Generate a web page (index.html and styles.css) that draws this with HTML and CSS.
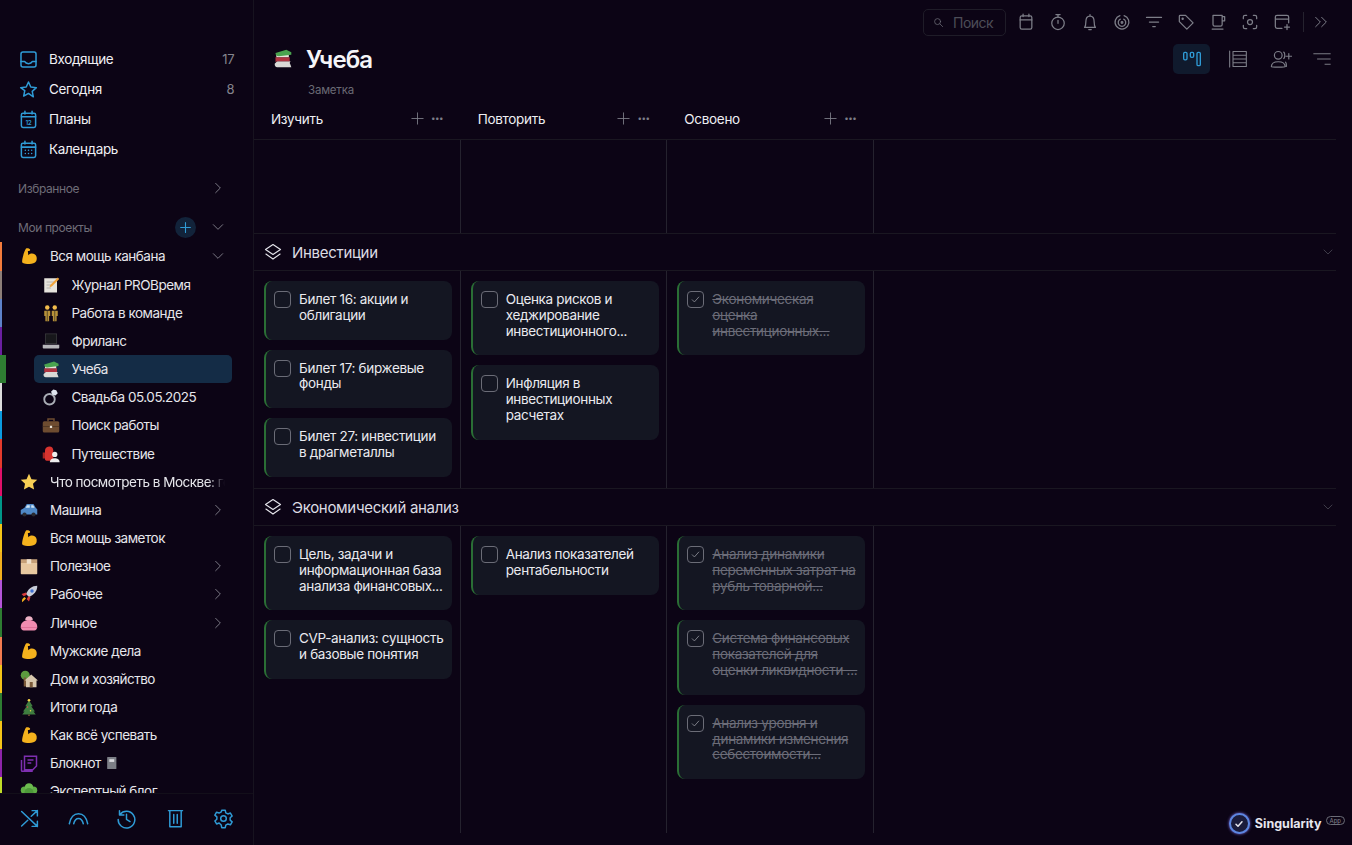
FILE: index.html
```html
<!DOCTYPE html>
<html lang="ru">

<head>
    <meta charset="UTF-8">
    <meta name="viewport" content="width=device-width, initial-scale=1.0">
    <title>Учеба</title>
    <link rel="stylesheet" href="styles.css">
</head>

<body>

    <svg class="sprite" xmlns="http://www.w3.org/2000/svg">
        <!-- line icons -->
        <symbol id="i-inbox" viewBox="0 0 24 24"><rect x="2.500" y="2.500" width="19" height="19" rx="2.500"/><path d="M2.500 14.500H7c1 1.800 3 2.800 5 2.800s4-1 5-2.800h4.500"/></symbol>
        <symbol id="i-star" viewBox="0 0 24 24"><path d="M12 2.500l2.900 6.400 7 .8-5.200 4.700 1.400 6.900L12 17l-6.100 3.300 1.400-6.900L2.100 9.700l7-.8z"/></symbol>
        <symbol id="i-plans" viewBox="0 0 24 24"><rect x="3" y="4" width="18" height="18" rx="2"/><path d="M3 8.500h18M7.500 1.500V5M16.500 1.500V5"/><text x="12" y="19" class="svg-num">12</text></symbol>
        <symbol id="i-cal" viewBox="0 0 24 24"><rect x="3" y="4" width="18" height="18" rx="2"/><path d="M3 9h18M7.500 1.500V5M16.500 1.500V5M8 13h.01M12 13h.01M16 13h.01M8 17h.01M12 17h.01M16 17h.01"/></symbol>
        <symbol id="i-right" viewBox="0 0 24 24"><path d="M8 4l8 8-8 8"/></symbol>
        <symbol id="i-down" viewBox="0 0 24 24"><path d="M4 8l8 8 8-8"/></symbol>
        <symbol id="i-plus" viewBox="0 0 24 24"><path d="M12 3v18M3 12h18"/></symbol>
        <symbol id="i-layers" viewBox="0 0 24 24"><path d="M12 3l9 6-9 6-9-6zM3.500 14.500L12 20.500l8.500-6"/></symbol>
        <symbol id="i-shuffle" viewBox="0 0 24 24"><path d="M3 4l18 17M21 15v6h-6M3 20.500L10 14M14 9.500L21 3M15 3h6v6"/></symbol>
        <symbol id="i-arc" viewBox="0 0 24 24"><path d="M1.500 18C3 10.500 7 6.500 12 6.500s9 4 10.500 11.500M6.500 18c1-4 3-6 5.500-6s4.500 2 5.500 6"/></symbol>
        <symbol id="i-history" viewBox="0 0 24 24"><path d="M4.500 7.500A9.500 9.500 0 1 1 2.500 13M4 3v5h5M12 7v6l4 2.500"/></symbol>
        <symbol id="i-trash" viewBox="0 0 24 24"><path d="M4 3h16M5.500 3v18.500h13V3M10 7.500v10M14 7.500v10"/></symbol>
        <symbol id="i-gear" viewBox="0 0 24 24"><circle cx="12" cy="12" r="3.200"/><path d="M10 2.500h4l.6 3 2.400 1.300 2.900-1 2 3.400-2.300 2v2.600l2.300 2-2 3.400-2.900-1-2.400 1.300-.6 3h-4l-.6-3L7 17.200l-2.900 1-2-3.400 2.300-2v-2.600l-2.300-2 2-3.400 2.900 1 2.400-1.300z"/></symbol>
        <symbol id="i-search" viewBox="0 0 24 24"><circle cx="10" cy="10" r="6.500"/><path d="M15 15l6 6"/></symbol>
        <symbol id="i-tcal" viewBox="0 0 24 24"><rect x="5" y="4.500" width="14" height="16" rx="2"/><path d="M5 9.500h14M8.500 2.500v3M15.500 2.500v3"/></symbol>
        <symbol id="i-timer" viewBox="0 0 24 24"><circle cx="12" cy="13.500" r="7.500"/><path d="M9.500 3h5M12 3v3M12 10v3.500"/></symbol>
        <symbol id="i-bell" viewBox="0 0 24 24"><path d="M5.500 18.500h13c-1.300-1.500-1.500-3-1.500-6.500 0-4-1.500-7-5-7s-5 3-5 7c0 3.500-.2 5-1.500 6.500zM12 3v2M10.500 21h3"/></symbol>
        <symbol id="i-target" viewBox="0 0 24 24"><path d="M14.500 4.300a8.300 8.300 0 1 1-5 0M14 8.600a4.500 4.500 0 1 1-4 0"/><circle cx="12" cy="12.500" r="1"/></symbol>
        <symbol id="i-filter" viewBox="0 0 24 24"><path d="M3 6.500h18M6.500 12h11M10.500 17.500h3"/></symbol>
        <symbol id="i-tag" viewBox="0 0 24 24"><path d="M4 5c0-.7.300-1 1-1h6.500l9 9-7.500 7.500-9-9z"/><circle cx="8" cy="8" r=".7"/></symbol>
        <symbol id="i-cup" viewBox="0 0 24 24"><path d="M6 4h11v11a2 2 0 0 1-2 2H8a2 2 0 0 1-2-2zM17 5.500h3v5h-3M5 20.500h13"/></symbol>
        <symbol id="i-focus" viewBox="0 0 24 24"><path d="M8 4H6a2 2 0 0 0-2 2v2M16 4h2a2 2 0 0 1 2 2v2M8 20H6a2 2 0 0 1-2-2v-2M16 20h2a2 2 0 0 0 2-2v-2"/><circle cx="12" cy="12" r="3"/></symbol>
        <symbol id="i-calplus" viewBox="0 0 24 24"><path d="M12 19.500H6a2 2 0 0 1-2-2V6a2 2 0 0 1 2-2h12a2 2 0 0 1 2 2v7M4 8.500h16M18 15v6M15 18h6"/></symbol>
        <symbol id="i-more" viewBox="0 0 24 24"><path d="M4 5l7 7-7 7M13 5l7 7-7 7"/></symbol>
        <symbol id="i-kanban" viewBox="0 0 24 24"><rect x="2" y="4" width="4" height="9" rx="1.500"/><rect x="10" y="4" width="4" height="6" rx="1.500"/><rect x="18" y="4" width="4" height="16" rx="1.500"/></symbol>
        <symbol id="i-list" viewBox="0 0 24 24"><path d="M2 2.500v19M6 3h16v18H6zM6 7.500h16M6 12h16M6 16.500h16"/></symbol>
        <symbol id="i-team" viewBox="0 0 24 24"><circle cx="9" cy="8" r="4.200"/><path d="M1.500 20.500c0-3.500 3-5.500 7.500-5.500s7.500 2 7.500 5.500c0 .5-15 .5-15 0zM15 4.500c1.500.8 1.500 6 0 7M17 15.500c.8 1 1 2.500.8 4.500M20.500 6v6M17.500 9h6"/></symbol>
        <symbol id="i-sort" viewBox="0 0 24 24"><path d="M1 5h22M6 12h17M16 19h7"/></symbol>
        <symbol id="i-check" viewBox="0 0 24 24"><path d="M6 12.500l4 4 8-9"/></symbol>

        <!-- emoji -->
        <symbol id="e-arm" viewBox="0 0 24 24"><path d="M8 2c2-1 5 0 5.500 1.500.4 1.300-1.500 2-3 1.800L11 11c2-2.500 6-3 9-1 2.500 1.800 3 6 1.500 9-1.500 2.500-5 3.500-9 3.500-3.500 0-8-.5-9.500-2-.9-2 2-14 5-18.500z" fill="#f5b21d"/></symbol>
        <symbol id="e-memo" viewBox="0 0 24 24"><rect x="3" y="3" width="17" height="19" fill="#e6e3dc"/><path d="M6 8h11M6 12h8M6 16h6" stroke="#a9a7a2" fill="none"/><path d="M21 2l2 2-10 10-3 1 1-3z" fill="#f2a33a"/></symbol>
        <symbol id="e-people" viewBox="0 0 24 24"><circle cx="7" cy="4.500" r="3" fill="#f3bd4c"/><circle cx="17" cy="4.500" r="3" fill="#f3bd4c"/><path d="M3 9h8v7H9.500v7h-5v-7H3zM13 9h8v7h-1.500v7h-5v-7H13z" fill="#b8923a"/><path d="M7 9v14M17 9v14" stroke="#3d3520"/></symbol>
        <symbol id="e-laptop" viewBox="0 0 24 24"><path d="M4 2h16v14H4z" fill="#3a3a3e"/><path d="M5 3h14v12H5z" fill="#17171b"/><path d="M1 17h22v3.500c0 .8-.5 1.500-1.500 1.500h-19C1.500 22 1 21.300 1 20.500z" fill="#b6b6ba"/></symbol>
        <symbol id="e-books" viewBox="0 0 24 24"><path d="M2 19l3-3h16l-1 2 1 2 1 3H5c-2 0-3-1-3-4z" fill="#d9d9d6"/><path d="M3 11h17v5H6c-2 0-3 1-3 1z" fill="#b03340"/><path d="M4 8h15v3H4z" fill="#e9e5da"/><path d="M3 6l13-4 6 3v3l-15 2c-3 0-4-2-4-4z" fill="#4aa34f"/></symbol>
        <symbol id="e-ring" viewBox="0 0 24 24"><circle cx="10" cy="15" r="7" fill="none" stroke="#a9adb5" stroke-width="2.500"/><path d="M15 2l4 1 2 4-3 3-4-1-2-4z" fill="#dfe5ee"/></symbol>
        <symbol id="e-case" viewBox="0 0 24 24"><path d="M8 7V4h8v3" fill="none" stroke="#6e4c30" stroke-width="2"/><rect x="1" y="7" width="22" height="15" rx="2" fill="#6e4c30"/><path d="M1 14h22" stroke="#4a3220"/><rect x="10.500" y="13" width="3" height="3" fill="#e8e2d8"/></symbol>
        <symbol id="e-pack" viewBox="0 0 24 24"><path d="M4 7c0-3 3-5 6-5s5 2 5 5v12c0 1-1 2-2 2H6c-1 0-2-1-2-2z" fill="#d8332f"/><path d="M1 10h3v8H1z" fill="#a82522"/><circle cx="17" cy="12.500" r="3.500" fill="#eee"/><path d="M10.500 23c0-4 3-5.500 6.500-5.500S23.500 19 23.500 23z" fill="#eee"/></symbol>
        <symbol id="e-star" viewBox="0 0 24 24"><path d="M12 1l3.300 7.200 7.700.9-5.700 5.300 1.500 7.600L12 18.200 5.200 22l1.500-7.600L1 9.100l7.700-.9z" fill="#f8cf55"/></symbol>
        <symbol id="e-car" viewBox="0 0 24 24"><path d="M6 9l3-5h9l3 5 2 2v7H1v-6z" fill="#4f88c6"/><path d="M9.500 5.500h3.500V9H7.500zM15 5.500h2.500L19.500 9H15z" fill="#cfe3f4"/><circle cx="6" cy="18" r="2.800" fill="#2a2a30"/><circle cx="18" cy="18" r="2.800" fill="#2a2a30"/></symbol>
        <symbol id="e-box" viewBox="0 0 24 24"><path d="M1 3h22v5H1z" fill="#c6a078"/><path d="M1 8h22v14c0 .5-.5 1-1 1H2c-.5 0-1-.5-1-1z" fill="#e8c8a0"/><path d="M9 3h6v6H9z" fill="#f0e2ce"/></symbol>
        <symbol id="e-rocket" viewBox="0 0 24 24"><path d="M23 1c-7 0-12 4-15 11l4 4c7-3 11-8 11-15z" fill="#c8ccd8"/><circle cx="16" cy="8" r="2.300" fill="#3f6fd1"/><path d="M8 10l-6 2 3 3 4-2zM14 16l-2 6-3-3 2-4z" fill="#d83a3a"/><path d="M6 16l2 2-5 5c-1-3 0-5 3-7z" fill="#f5b21d"/></symbol>
        <symbol id="e-purse" viewBox="0 0 24 24"><path d="M7 8a5 5 0 0 1 10 0" fill="#eeb2c6"/><path d="M1 17c0-6 5-9 11-9s11 3 11 9c0 3-2 5-4 5H5c-2 0-4-2-4-5z" fill="#f08cb0"/><path d="M1 18h22" stroke="#d96a92"/></symbol>
        <symbol id="e-house" viewBox="0 0 24 24"><circle cx="7" cy="7" r="6" fill="#5c9a3e"/><path d="M5 10h3v12H5z" fill="#7b5a3a"/><path d="M6 14l9-8 9 8h-2v9H8v-9z" fill="#d7c7ad"/><path d="M13 16h4v7h-4z" fill="#7b5a3a"/></symbol>
        <symbol id="e-xmas" viewBox="0 0 24 24"><path d="M12 3l5 8h-2l5 7h-2l3 4H3l3-4H4l5-7H7z" fill="#3f7d3f"/><circle cx="12" cy="3" r="1.800" fill="#f5d24a"/><circle cx="10" cy="12" r="1" fill="#e24a4a"/><circle cx="14" cy="17" r="1" fill="#e6d44a"/><path d="M11 22h2v2h-2z" fill="#7b5a3a"/></symbol>
        <symbol id="e-note" viewBox="0 0 24 24"><path d="M6 3h16v13l-5 5H6zM2 8v14c0 .5.500 1 1 1h14" fill="none" stroke="#7e2fb0" stroke-width="2"/><path d="M10 8h8M10 12h5" stroke="#7e2fb0" stroke-width="2"/></symbol>
        <symbol id="e-book" viewBox="0 0 24 24"><rect x="4" y="1" width="17" height="22" rx="1" fill="#7c7f86"/><rect x="8" y="5" width="9" height="5" fill="#d8dade"/></symbol>
        <symbol id="e-clover" viewBox="0 0 24 24"><circle cx="6" cy="11" r="5" fill="#5fae45"/><circle cx="18" cy="11" r="5" fill="#5fae45"/><circle cx="12" cy="7" r="5.500" fill="#6cbb4f"/><circle cx="12" cy="14" r="6" fill="#4e9a3a"/></symbol>
    </svg>

    <div class="app">
        <aside class="sidebar">
            <nav class="main-nav">
                <a class="nav-row"><svg class="ico nav-ico"><use href="#i-inbox"/></svg><span class="nav-name">Входящие</span><span class="count">17</span></a>
                <a class="nav-row"><svg class="ico nav-ico"><use href="#i-star"/></svg><span class="nav-name">Сегодня</span><span class="count">8</span></a>
                <a class="nav-row"><svg class="ico nav-ico"><use href="#i-plans"/></svg><span class="nav-name">Планы</span></a>
                <a class="nav-row"><svg class="ico nav-ico"><use href="#i-cal"/></svg><span class="nav-name">Календарь</span></a>
            </nav>

            <div class="section fav">
                <span class="section-name">Избранное</span>
                <svg class="ico chev"><use href="#i-right"/></svg>
            </div>
            <div class="section projects">
                <span class="section-name">Мои проекты</span>
                <span class="add-btn"><svg class="ico"><use href="#i-plus"/></svg></span>
                <svg class="ico chev"><use href="#i-down"/></svg>
            </div>

            <div class="tree">
                <div class="row c-orange"><span class="bar"></span><svg class="emoji"><use href="#e-arm"/></svg><span class="row-name">Вся мощь канбана</span><svg class="ico chev"><use href="#i-down"/></svg></div>
                <div class="row child c-taupe"><span class="bar"></span><svg class="emoji"><use href="#e-memo"/></svg><span class="row-name">Журнал PROВремя</span></div>
                <div class="row child c-blue"><span class="bar"></span><svg class="emoji"><use href="#e-people"/></svg><span class="row-name">Работа в команде</span></div>
                <div class="row child c-violet"><span class="bar"></span><svg class="emoji"><use href="#e-laptop"/></svg><span class="row-name">Фриланс</span></div>
                <div class="row child active c-green"><span class="bar"></span><span class="pill"><svg class="emoji"><use href="#e-books"/></svg><span class="row-name">Учеба</span></span></div>
                <div class="row child c-white"><span class="bar"></span><svg class="emoji"><use href="#e-ring"/></svg><span class="row-name">Свадьба 05.05.2025</span></div>
                <div class="row child c-sky"><span class="bar"></span><svg class="emoji"><use href="#e-case"/></svg><span class="row-name">Поиск работы</span></div>
                <div class="row child c-red"><span class="bar"></span><svg class="emoji"><use href="#e-pack"/></svg><span class="row-name">Путешествие</span></div>
                <div class="row c-pink"><span class="bar"></span><svg class="emoji"><use href="#e-star"/></svg><span class="row-name fade">Что посмотреть в Москве: город</span></div>
                <div class="row c-teal"><span class="bar"></span><svg class="emoji"><use href="#e-car"/></svg><span class="row-name">Машина</span><svg class="ico chev"><use href="#i-right"/></svg></div>
                <div class="row c-yellow"><span class="bar"></span><svg class="emoji"><use href="#e-arm"/></svg><span class="row-name">Вся мощь заметок</span></div>
                <div class="row c-amber"><span class="bar"></span><svg class="emoji"><use href="#e-box"/></svg><span class="row-name">Полезное</span><svg class="ico chev"><use href="#i-right"/></svg></div>
                <div class="row c-orchid"><span class="bar"></span><svg class="emoji"><use href="#e-rocket"/></svg><span class="row-name">Рабочее</span><svg class="ico chev"><use href="#i-right"/></svg></div>
                <div class="row c-green"><span class="bar"></span><svg class="emoji"><use href="#e-purse"/></svg><span class="row-name">Личное</span><svg class="ico chev"><use href="#i-right"/></svg></div>
                <div class="row c-salmon"><span class="bar"></span><svg class="emoji"><use href="#e-arm"/></svg><span class="row-name">Мужские дела</span></div>
                <div class="row c-yellow"><span class="bar"></span><svg class="emoji"><use href="#e-house"/></svg><span class="row-name">Дом и хозяйство</span></div>
                <div class="row c-green"><span class="bar"></span><svg class="emoji"><use href="#e-xmas"/></svg><span class="row-name">Итоги года</span></div>
                <div class="row c-yellow"><span class="bar"></span><svg class="emoji"><use href="#e-arm"/></svg><span class="row-name">Как всё успевать</span></div>
                <div class="row c-purple"><span class="bar"></span><svg class="emoji"><use href="#e-note"/></svg><span class="row-name">Блокнот <svg class="emoji-inline"><use href="#e-book"/></svg></span></div>
                <div class="row c-lime"><span class="bar"></span><svg class="emoji"><use href="#e-clover"/></svg><span class="row-name">Экспертный блог</span></div>
            </div>

            <div class="side-foot">
                <svg class="ico"><use href="#i-shuffle"/></svg>
                <svg class="ico"><use href="#i-arc"/></svg>
                <svg class="ico"><use href="#i-history"/></svg>
                <svg class="ico"><use href="#i-trash"/></svg>
                <svg class="ico"><use href="#i-gear"/></svg>
            </div>
        </aside>

        <main class="content">
            <div class="toolbar">
                <div class="search"><svg class="ico"><use href="#i-search"/></svg><span>Поиск</span></div>
                <svg class="ico tool"><use href="#i-tcal"/></svg>
                <svg class="ico tool"><use href="#i-timer"/></svg>
                <svg class="ico tool"><use href="#i-bell"/></svg>
                <svg class="ico tool"><use href="#i-target"/></svg>
                <svg class="ico tool"><use href="#i-filter"/></svg>
                <svg class="ico tool"><use href="#i-tag"/></svg>
                <svg class="ico tool"><use href="#i-cup"/></svg>
                <svg class="ico tool"><use href="#i-focus"/></svg>
                <svg class="ico tool"><use href="#i-calplus"/></svg>
                <span class="tool-sep"></span>
                <svg class="ico tool tool-more"><use href="#i-more"/></svg>
            </div>

            <div class="title-row">
                <svg class="title-emoji"><use href="#e-books"/></svg>
                <h1>Учеба</h1>
                <div class="views">
                    <span class="view view-on"><svg class="ico"><use href="#i-kanban"/></svg></span>
                    <span class="view"><svg class="ico"><use href="#i-list"/></svg></span>
                    <span class="view"><svg class="ico view-team"><use href="#i-team"/></svg></span>
                    <span class="view"><svg class="ico view-sort"><use href="#i-sort"/></svg></span>
                </div>
            </div>
            <p class="note">Заметка</p>

            <div class="board">
                <div class="heads">
                    <div class="head"><span class="head-name">Изучить</span><svg class="ico"><use href="#i-plus"/></svg><span class="dots">···</span></div>
                    <div class="head"><span class="head-name">Повторить</span><svg class="ico"><use href="#i-plus"/></svg><span class="dots">···</span></div>
                    <div class="head"><span class="head-name">Освоено</span><svg class="ico"><use href="#i-plus"/></svg><span class="dots">···</span></div>
                </div>

                <div class="lane lane-empty">
                    <div class="col"></div>
                    <div class="col"></div>
                    <div class="col"></div>
                </div>

                <div class="group">
                    <svg class="ico"><use href="#i-layers"/></svg>
                    <span class="group-name">Инвестиции</span>
                    <svg class="ico chev"><use href="#i-down"/></svg>
                </div>
                <div class="lane lane-one">
                    <div class="col">
                        <div class="card"><span class="box"></span><p>Билет 16: акции и облигации</p></div>
                        <div class="card"><span class="box"></span><p>Билет 17: биржевые фонды</p></div>
                        <div class="card"><span class="box"></span><p>Билет 27: инвестиции в драгметаллы</p></div>
                    </div>
                    <div class="col">
                        <div class="card"><span class="box"></span><p>Оценка рисков и хеджирование инвестиционного...</p></div>
                        <div class="card"><span class="box"></span><p>Инфляция в инвестиционных расчетах</p></div>
                    </div>
                    <div class="col">
                        <div class="card done"><span class="box"><svg class="ico"><use href="#i-check"/></svg></span><p>Экономическая оценка инвестиционных...</p></div>
                    </div>
                </div>

                <div class="group">
                    <svg class="ico"><use href="#i-layers"/></svg>
                    <span class="group-name">Экономический анализ</span>
                    <svg class="ico chev"><use href="#i-down"/></svg>
                </div>
                <div class="lane lane-two">
                    <div class="col">
                        <div class="card"><span class="box"></span><p>Цель, задачи и информационная база анализа финансовых...</p></div>
                        <div class="card"><span class="box"></span><p>CVP-анализ: сущность и базовые понятия</p></div>
                    </div>
                    <div class="col">
                        <div class="card"><span class="box"></span><p>Анализ показателей рентабельности</p></div>
                    </div>
                    <div class="col">
                        <div class="card done"><span class="box"><svg class="ico"><use href="#i-check"/></svg></span><p>Анализ динамики переменных затрат на рубль товарной...</p></div>
                        <div class="card done"><span class="box"><svg class="ico"><use href="#i-check"/></svg></span><p>Система финансовых показателей для оценки ликвидности ...</p></div>
                        <div class="card done"><span class="box"><svg class="ico"><use href="#i-check"/></svg></span><p>Анализ уровня и динамики изменения себестоимости...</p></div>
                    </div>
                </div>
            </div>
        </main>
    </div>

    <div class="brand">
        <span class="brand-logo"><svg class="ico"><use href="#i-check"/></svg></span>
        <span class="brand-name">Singularity</span>
        <span class="brand-tag">App</span>
    </div>

</body>

</html>
```

FILE: styles.css
```css
* {
    margin: 0;
    box-sizing: border-box;
}

body {
    background-color: #0c0415;
    color: #e9e9ee;
    font-family: 'Inter', 'Noto Sans', sans-serif;
    font-size: 13.5px;
    letter-spacing: -0.5px;
    height: 845px;
    overflow: hidden;
}

.sprite {
    display: none;
}

.svg-num {
    font-family: 'Inter', sans-serif;
    font-size: 8px;
    font-weight: 600;
    text-anchor: middle;
    stroke: none;
    fill: currentColor;
}

.ico {
    fill: none;
    stroke: currentColor;
    stroke-width: 1.7;
    stroke-linecap: round;
    stroke-linejoin: round;
    flex: none;
}

.app {
    display: flex;
    height: 845px;
}

/* sidebar */
.sidebar {
    width: 254px;
    flex: none;
    display: flex;
    flex-direction: column;
    border-right: 1px solid #17131f;
}

.main-nav {
    padding-top: 44px;
}

.nav-row {
    display: flex;
    align-items: center;
    height: 30px;
    padding: 0 19px 0 19px;
}

.nav-ico {
    width: 19px;
    height: 19px;
    color: #2f9bd6;
    margin-right: 11px;
    stroke-width: 1.9;
}

.nav-name {
    flex: 1;
    font-weight: 400;
    letter-spacing: -0.35px;
    color: #f0f0f4;
}

.count {
    color: #85858d;
    font-size: 13px;
}

.section {
    display: flex;
    align-items: center;
    height: 28px;
    padding: 0 28.5px 0 18px;
    color: #6f6d78;
    font-size: 12px;
    letter-spacing: -0.4px;
}

.section-name {
    flex: 1;
}

.fav {
    margin-top: 10px;
}

.projects {
    margin-top: 11px;
    margin-bottom: 1px;
}

.chev {
    width: 14px;
    height: 14px;
    color: #7a7884;
    stroke-width: 1.7;
}

.add-btn {
    width: 21px;
    height: 21px;
    border-radius: 50%;
    background-color: #12233a;
    color: #2f9bd6;
    display: flex;
    align-items: center;
    justify-content: center;
    margin-right: 15px;
}

.add-btn .ico {
    width: 13px;
    height: 13px;
    stroke-width: 2;
}

.tree {
    flex: 1;
    overflow: hidden;
    padding-top: 0.4px;
}

.row {
    display: flex;
    align-items: center;
    height: 28.17px;
    padding-right: 28.5px;
}

.bar {
    width: 2px;
    align-self: stretch;
    flex: none;
    margin-right: 18px;
    background-color: var(--bar);
}

.child .bar {
    margin-right: 39.5px;
}

.emoji {
    width: 18px;
    height: 18px;
    flex: none;
    margin-right: 12px;
}

.row-name {
    flex: 1;
    font-weight: 400;
    white-space: nowrap;
    overflow: hidden;
    color: #e6e6eb;
    display: flex;
    align-items: center;
    gap: 4px;
}

.fade {
    -webkit-mask-image: linear-gradient(to right, #000 90%, transparent);
    mask-image: linear-gradient(to right, #000 90%, transparent);
}

.emoji-inline {
    width: 13px;
    height: 14px;
}

.active {
    padding-right: 21px;
}

.active .bar {
    width: 6px;
    margin-right: 28px;
}

.pill {
    flex: 1;
    height: 28px;
    display: flex;
    align-items: center;
    padding-left: 7.500px;
    background-color: #142c46;
    border-radius: 5px;
}

.c-orange { --bar: #f47c3c; }
.c-taupe { --bar: #8d7f78; }
.c-blue { --bar: #5d82c9; }
.c-violet { --bar: #6a1fa0; }
.c-green { --bar: #2e7d32; }
.c-white { --bar: #dcdcdc; }
.c-sky { --bar: #0b9be0; }
.c-red { --bar: #e53a2c; }
.c-pink { --bar: #e0106a; }
.c-teal { --bar: #009688; }
.c-yellow { --bar: #f5c518; }
.c-amber { --bar: #f2b01e; }
.c-orchid { --bar: #b455d8; }
.c-salmon { --bar: #f47b50; }
.c-purple { --bar: #8e24aa; }
.c-lime { --bar: #c0dc28; }

.side-foot {
    height: 52px;
    flex: none;
    display: flex;
    align-items: center;
    justify-content: space-between;
    padding: 0 19px 2px;
    border-top: 1px solid #130f1a;
    color: #2f9bd6;
}

.side-foot .ico {
    width: 21px;
    height: 21px;
}

/* main area */
.content {
    flex: 1;
    min-width: 0;
}

.toolbar {
    height: 44px;
    display: flex;
    align-items: center;
    justify-content: flex-end;
    color: #7d7e88;
    padding-right: 23px;
}

.search {
    width: 83px;
    height: 27px;
    border: 1px solid #1f1c28;
    border-radius: 5px;
    display: flex;
    align-items: center;
    gap: 9px;
    padding-left: 9px;
    margin-right: 4px;
    color: #4d4d58;
    font-size: 14px;
}

.search .ico {
    width: 11px;
    height: 11px;
    color: #6b6b75;
}

.tool {
    width: 20px;
    height: 20px;
    margin: 0 6px;
    stroke-width: 1.5;
}

.tool-sep {
    width: 1px;
    height: 20px;
    background-color: #25222e;
    margin: 0 4px 0 5px;
}

.tool-more {
    width: 16px;
    height: 16px;
    margin: 0 0 0 5px;
}

.title-row {
    height: 30px;
    display: flex;
    align-items: center;
    padding: 0 11.5px 0 19px;
}

.title-emoji {
    width: 20px;
    height: 20px;
    margin-right: 13px;
    position: relative;
    top: -1px;
}

h1 {
    flex: 1;
    font-size: 24px;
    font-weight: 600;
    letter-spacing: -0.9px;
    color: #f5f5f8;
}

.views {
    display: flex;
    align-items: center;
    color: #7d7e88;
}

.view {
    width: 37px;
    height: 30px;
    display: flex;
    align-items: center;
    justify-content: center;
}

.view:nth-child(2) {
    margin-left: 9.5px;
}

.view:nth-child(3) {
    margin-left: 6px;
}

.view:nth-child(4) {
    margin-left: 4px;
}

.view .ico {
    width: 20px;
    height: 20px;
    stroke-width: 1.3;
}

.view .view-team {
    width: 22px;
    height: 22px;
}

.view .view-sort {
    width: 18px;
    height: 18px;
}

.view-on {
    background-color: #101a2d;
    border-radius: 5px;
    color: #2f9bd6;
}

.view-on .ico {
    stroke-width: 1.6;
}

.note {
    height: 30px;
    padding-top: 1px;
    line-height: 30px;
    padding-left: 54px;
    font-size: 11.5px;
    letter-spacing: -0.2px;
    color: #6a6a74;
}

.board {
    width: 1082px;
}

.heads,
.lane {
    display: grid;
    grid-template-columns: repeat(3, 206.67px) 1fr;
}

.heads {
    height: 36px;
    padding-bottom: 6px;
    border-bottom: 1px solid #1a1721;
}

.head {
    display: flex;
    align-items: center;
    padding: 0 18px 0 17px;
    color: #7d7e88;
}

.head-name {
    flex: 1;
    color: #eeeef2;
    font-weight: 400;
    letter-spacing: -0.3px;
}

.head .ico {
    width: 15px;
    height: 15px;
    stroke-width: 1.4;
}

.dots {
    width: 12px;
    margin-left: 6px;
    font-size: 15px;
    font-weight: 700;
    letter-spacing: -1px;
    line-height: 1;
}

.lane {
    border-bottom: 1px solid #1a1721;
}

.lane-empty {
    height: 94px;
}

.lane-one {
    height: 218px;
}

.lane-two {
    height: 307px;
    border-bottom: none;
}

.col {
    border-right: 1px solid #25222e;
    padding: 10px 7.5px 0 10px;
    display: flex;
    flex-direction: column;
    gap: 10px;
}

.group {
    height: 37px;
    display: flex;
    align-items: center;
    gap: 9px;
    padding: 0 2px 0 9px;
    border-bottom: 1px solid #1a1721;
    color: #e4e4ea;
}

.group .ico {
    width: 20px;
    height: 20px;
    stroke-width: 1.4;
}

.group-name {
    flex: 1;
    font-size: 15px;
    letter-spacing: -0.3px;
    color: #dcdce3;
}

.group .chev {
    width: 12px;
    height: 12px;
    color: #44424e;
    stroke-width: 1.8;
}

.card {
    display: flex;
    gap: 8px;
    background-color: #141622;
    border-left: 2px solid #2a6e35;
    border-radius: 8px;
    padding: 10px 7px 16px 8px;
}

.card p {
    margin-top: 1px;
    font-size: 13.5px;
    line-height: 15.8px;
    font-weight: 400;
    letter-spacing: -0.32px;
    color: #eaeaef;
}

.box {
    width: 17px;
    height: 17px;
    flex: none;
    border: 1.3px solid #6b6c77;
    border-radius: 4px;
    display: flex;
    align-items: center;
    justify-content: center;
    color: #8b8c96;
}

.box .ico {
    width: 13px;
    height: 13px;
    stroke-width: 1.6;
}

.card.done p {
    color: #6b6c78;
    text-decoration: line-through;
}

/* logo in the corner */
.brand {
    position: absolute;
    right: 7px;
    bottom: 11px;
    display: flex;
    align-items: center;
    color: #e6e6ee;
}

.brand-logo {
    width: 21px;
    height: 21px;
    border-radius: 50%;
    background-color: #1b1c3c;
    border: 2px solid #5c86e0;
    box-shadow: 0 0 3px #7d6ee0;
    display: flex;
    align-items: center;
    justify-content: center;
    margin-right: 5px;
}

.brand-logo .ico {
    width: 12px;
    height: 12px;
    stroke-width: 3;
}

.brand-name {
    font-size: 12.5px;
    font-weight: 700;
    letter-spacing: 0;
}

.brand-tag {
    font-size: 6px;
    letter-spacing: 0;
    border: 1px solid #6b6c77;
    border-radius: 6px;
    padding: 0 3px;
    margin-left: 4px;
    margin-top: -7px;
    color: #85858d;
}
```
